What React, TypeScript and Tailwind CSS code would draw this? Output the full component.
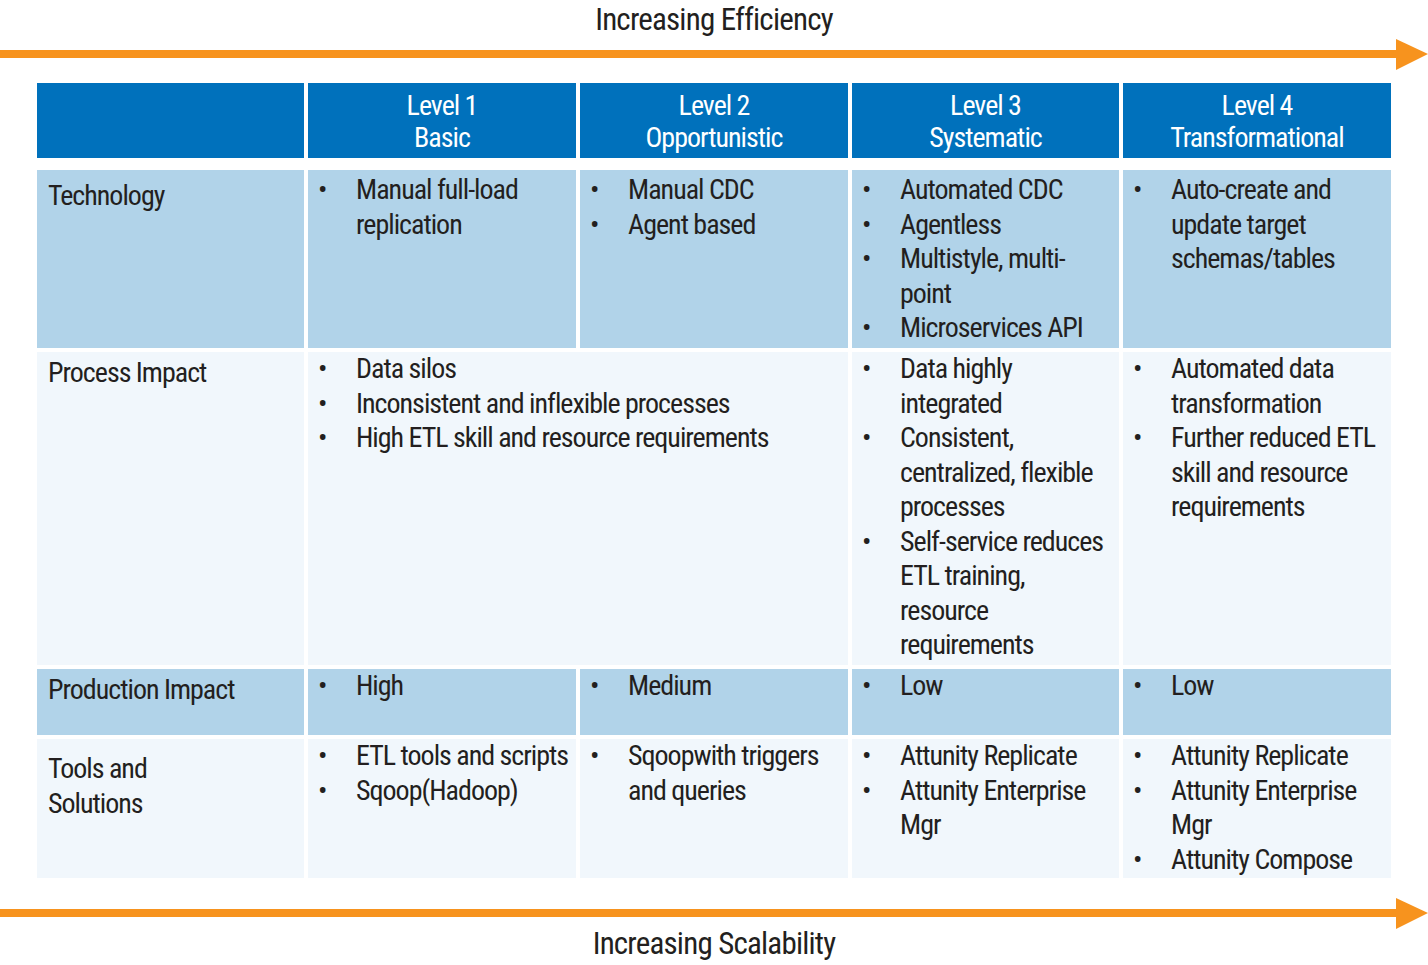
import React from "react";

const font = { fontFamily: '"Roboto Condensed", "Open Sans Condensed", "Liberation Sans Narrow", "DejaVu Sans Condensed", sans-serif' };

function Arrow() {
  return (
    <svg width="1428" height="32" viewBox="0 0 1428 32" className="block">
      <rect x="0" y="11" width="1400" height="8" fill="#f7931e" />
      <polygon points="1396,0 1428,15 1396,31" fill="#f7931e" />
    </svg>
  );
}

function Bullets({ items }: { items: string[] }) {
  return (
    <ul className="flex flex-col">
      {items.map((item) => (
        <li key={item} className="flex">
          <span className="w-[48px] shrink-0 pl-[10px]">•</span>
          <span className="flex-1 whitespace-pre-line">{item}</span>
        </li>
      ))}
    </ul>
  );
}

const levels = [
  ["Level 1", "Basic"],
  ["Level 2", "Opportunistic"],
  ["Level 3", "Systematic"],
  ["Level 4", "Transformational"],
];

export default function App() {
  const dark = "bg-[#b1d3e9]";
  const pale = "bg-[#f1f7fc]";
  return (
    <div style={font} className="w-[1428px] h-[965px] bg-white text-[#231f20] flex flex-col">
      <div className="h-[39px] text-center text-[31px] leading-[39px] tracking-[-0.8px]">Increasing Efficiency</div>
      <Arrow />
      <div className="ml-[37px] mt-[12px] flex flex-col text-[28px] leading-[34.5px] tracking-[-1px]">
        <div className="grid grid-cols-[267px_268px_268px_267px_268px] gap-x-[4px] h-[75px] mb-[12px]">
          <div className="bg-[#0071bc]" />
          {levels.map(([a, b]) => (
            <div key={a} className="bg-[#0071bc] text-white flex flex-col items-center justify-center leading-[32px] pt-[2px]">
              <span>{a}</span>
              <span>{b}</span>
            </div>
          ))}
        </div>
        <div className="grid grid-cols-[267px_268px_268px_267px_268px] grid-rows-[178px_313px_66px_139px] gap-[4px]">
          <div className={`${dark} pl-[11px] pt-[9px]`}>Technology</div>
          <div className={`${dark} pt-[3px]`}><Bullets items={["Manual full-load\nreplication"]} /></div>
          <div className={`${dark} pt-[3px]`}><Bullets items={["Manual CDC", "Agent based"]} /></div>
          <div className={`${dark} pt-[3px]`}><Bullets items={["Automated CDC", "Agentless", "Multistyle, multi-\npoint", "Microservices API"]} /></div>
          <div className={`${dark} pt-[3px]`}><Bullets items={["Auto-create and\nupdate target\nschemas/tables"]} /></div>

          <div className={`${pale} pl-[11px] pt-[4px]`}>Process Impact</div>
          <div className={`${pale} col-span-2`}><Bullets items={["Data silos", "Inconsistent and inflexible processes", "High ETL skill and resource requirements"]} /></div>
          <div className={pale}><Bullets items={["Data highly\nintegrated", "Consistent,\ncentralized, flexible\nprocesses", "Self-service reduces\nETL training,\nresource\nrequirements"]} /></div>
          <div className={pale}><Bullets items={["Automated data\ntransformation", "Further reduced ETL\nskill and resource\nrequirements"]} /></div>

          <div className={`${dark} pl-[11px] pt-[4px]`}>Production Impact</div>
          <div className={dark}><Bullets items={["High"]} /></div>
          <div className={dark}><Bullets items={["Medium"]} /></div>
          <div className={dark}><Bullets items={["Low"]} /></div>
          <div className={dark}><Bullets items={["Low"]} /></div>

          <div className={`${pale} pl-[11px] pt-[13px]`}>Tools and<br />Solutions</div>
          <div className={pale}><Bullets items={["ETL tools and scripts", "Sqoop(Hadoop)"]} /></div>
          <div className={pale}><Bullets items={["Sqoopwith triggers\nand queries"]} /></div>
          <div className={pale}><Bullets items={["Attunity Replicate", "Attunity Enterprise\nMgr"]} /></div>
          <div className={pale}><Bullets items={["Attunity Replicate", "Attunity Enterprise\nMgr", "Attunity Compose"]} /></div>
        </div>
      </div>
      <div className="mt-[20px]"><Arrow /></div>
      <div className="text-center text-[31px] leading-[28px] tracking-[-0.8px]">Increasing Scalability</div>
    </div>
  );
}
